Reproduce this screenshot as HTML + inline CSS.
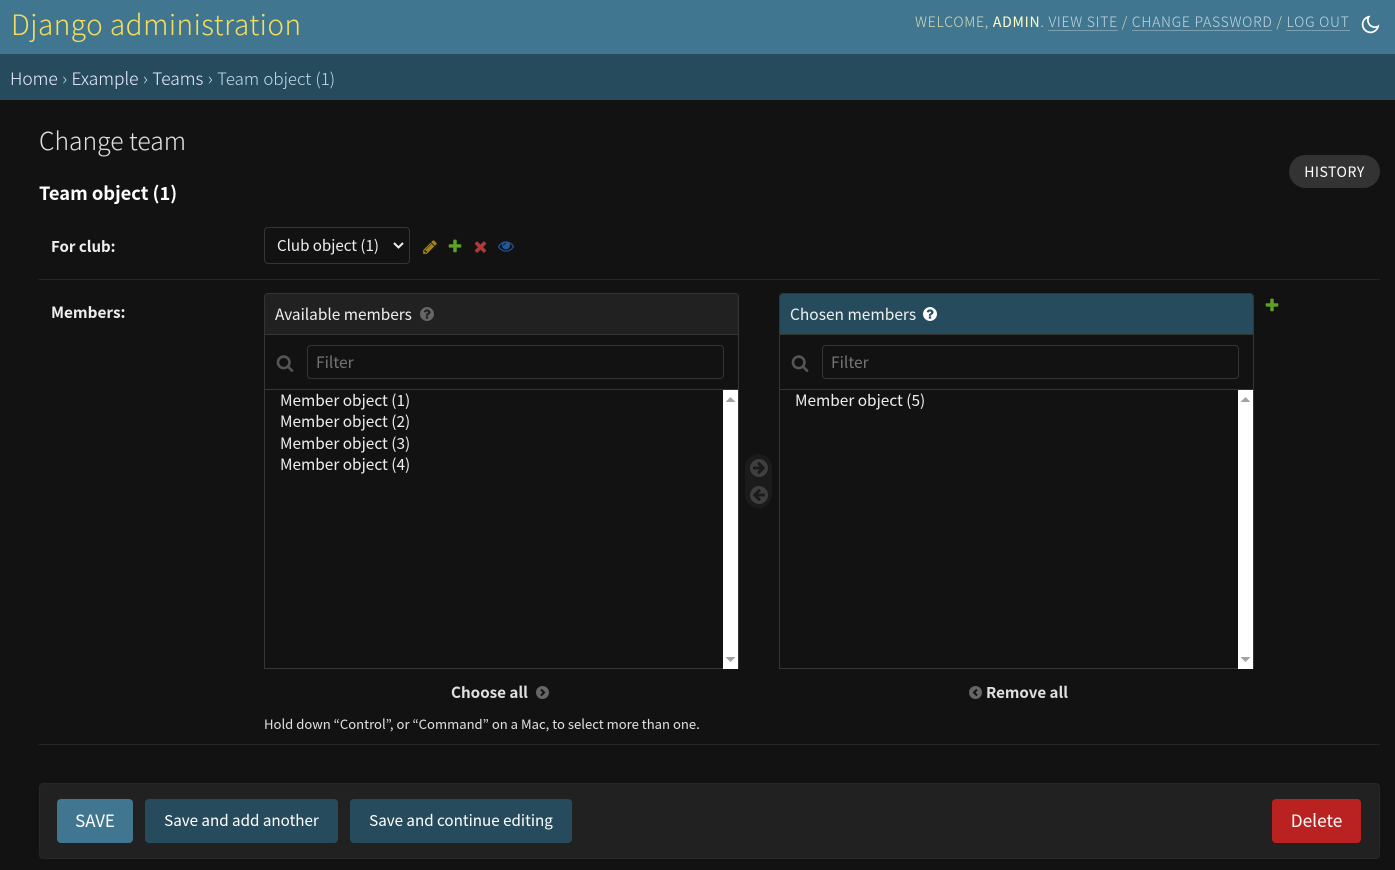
<!DOCTYPE html>
<html lang="en"><head><meta charset="utf-8"><title>Change team</title>
<style>
html,body{margin:0;padding:0;width:1395px;height:870px;overflow:hidden;background:#121212}
body{position:relative;color:#eee;font-family:"Noto Sans CJK JP","Liberation Sans",sans-serif;font-size:14px}
.a{position:absolute;white-space:nowrap;box-sizing:border-box}
svg{display:block;position:absolute}
.lnk{display:inline-block;line-height:15px;border-bottom:1px solid rgba(255,255,255,.3);color:#c3d6e0}
.btn{border-radius:4px;color:#fff;font-size:15.2px;line-height:42px;text-align:center;height:44px;top:799px}
.opt{font-size:15.4px;line-height:21px;color:#eee}
</style></head><body>
<div class="a" style="left:0;top:0;width:1395px;height:54px;background:#417690"></div>
<div class="a" style="left:0;top:54px;width:1395px;height:46px;background:#264b5d"></div>
<div class="a" style="left:11px;top:5px;font-size:28px;line-height:38px;font-weight:300;color:#f5dd5d;letter-spacing:.47px">Django administration</div>
<div class="a" style="left:915px;top:13px;font-size:14px;line-height:19px;font-weight:300;color:#d5dcb4;letter-spacing:.745px">WELCOME, <b style="font-weight:400;color:#ffc">ADMIN</b>. <span class="lnk">VIEW SITE</span> / <span class="lnk">CHANGE PASSWORD</span> / <span class="lnk">LOG OUT</span></div>
<svg style="left:1360px;top:14px" width="21" height="21" viewBox="0 0 24 24"><path fill="#fff" d="M10 7a7 7 0 0 0 12 4.900v.1c0 5.523-4.477 10-10 10S2 17.523 2 12 6.477 2 12 2h.1A6.979 6.979 0 0 0 10 7zm-6 5a8 8 0 0 0 15.062 3.762A9 9 0 0 1 8.238 4.938 7.996 7.996 0 0 0 4 12z"/></svg>
<div class="a" style="left:10px;top:66px;font-size:17.4px;line-height:24px;font-weight:300;color:#c4dce8;word-spacing:.5px"><span style="color:#eef">Home</span> › <span style="color:#eef">Example</span> › <span style="color:#eef">Teams</span> › <span style="font-size:16.9px">Team object (1)</span></div>

<div class="a" style="left:39px;top:124px;font-size:24.7px;line-height:32px;font-weight:300;color:#e0e0e0">Change team</div>
<div class="a" style="left:1289px;top:155px;width:91px;height:33px;border-radius:16.500px;background:#333;color:#fff;font-size:14px;line-height:35px;text-align:center;letter-spacing:.5px">HISTORY</div>
<div class="a" style="left:39px;top:180px;font-size:18.3px;line-height:27px;font-weight:700;color:#fff">Team object (1)</div>

<div class="a" style="left:51px;top:236px;font-size:15px;line-height:21px;font-weight:700;color:#eee">For club:</div>
<div class="a" style="left:264px;top:227px;width:146px;height:37px;border:1px solid #353535;border-radius:4px;background:#121212"></div>
<div class="a" style="left:277px;top:235px;font-size:15.1px;line-height:21px;color:#eee">Club object (1)</div>
<svg style="left:392px;top:241px" width="13" height="9" viewBox="0 0 13 9"><path d="M2 2l4.500 4.500L11 2" fill="none" stroke="#eee" stroke-width="2"/></svg>
<svg style="left:422px;top:239px" width="16" height="16" viewBox="0 0 1792 1792"><path fill="#a8820b" d="M491 1536l91-91-235-235-91 91v107h128v128h107zm523-928q0-22-22-22-10 0-17 7l-542 542q-7 7-7 17 0 22 22 22 10 0 17-7l542-542q7-7 7-17zm-54-192l416 416-832 832h-416v-416zm683 96q0 53-37 90l-166 166-416-416 166-165q36-38 90-38 53 0 91 38l235 234q37 39 37 91z"/></svg>
<svg style="left:447px;top:238px" width="16" height="16" viewBox="0 0 1792 1792"><path fill="#5fa225" d="M1600 796v192q0 40-28 68t-68 28h-416v416q0 40-28 68t-68 28h-192q-40 0-68-28t-28-68v-416h-416q-40 0-68-28t-28-68v-192q0-40 28-68t68-28h416v-416q0-40 28-68t68-28h192q40 0 68 28t28 68v416h416q40 0 68 28t28 68z"/></svg>
<svg style="left:472px;top:238px" width="17" height="17" viewBox="0 0 1792 1792"><path fill="#b03838" d="M1490 1322q0 40-28 68l-136 136q-28 28-68 28t-68-28l-294-294-294 294q-28 28-68 28t-68-28l-136-136q-28-28-28-68t28-68l294-294-294-294q-28-28-28-68t28-68l136-136q28-28 68-28t68 28l294 294 294-294q28-28 68-28t68 28l136 136q28 28 28 68t-28 68l-294 294 294 294q28 28 28 68z"/></svg>
<svg style="left:498px;top:238px" width="16" height="16" viewBox="0 0 1792 1792"><path fill="#22599a" d="M1664 960q-152-236-381-353 61 104 61 225 0 185-131.500 316.500t-316.500 131.500-316.500-131.500-131.500-316.500q0-121 61-225-229 117-381 353 133 205 333.500 326.500t434.500 121.500 434.500-121.500 333.500-326.500zm-720-384q0-20-14-34t-34-14q-125 0-214.500 89.500t-89.500 214.500q0 20 14 34t34 14 34-14 14-34q0-86 61-147t147-61q20 0 34-14t14-34zm848 384q0 34-20 69-140 230-376.500 368.500t-499.500 138.500-499.500-139-376.500-368q-20-35-20-69t20-69q140-229 376.500-368t499.500-139 499.500 139 376.500 368q20 35 20 69z"/></svg>
<div class="a" style="left:39px;top:279px;width:1341px;height:1px;background:#272727"></div>

<div class="a" style="left:51px;top:302px;font-size:15.3px;line-height:21px;font-weight:700;color:#eee">Members:</div>

<!-- available -->
<div class="a" style="left:264px;top:293px;width:475px;height:376px;border:1px solid #353535;border-radius:4px 4px 0 0"></div>
<div class="a" style="left:265px;top:294px;width:473px;height:41px;background:#212121;border-radius:3px 3px 0 0;border-bottom:1px solid #353535"></div>
<div class="a" style="left:275px;top:304px;font-size:15.4px;line-height:21px;color:#eee">Available members</div>
<svg style="left:420px;top:307px" width="14" height="14" viewBox="0 128 1536 1536"><path fill="#666" d="M896 1376v-192q0-14-9-23t-23-9h-192q-14 0-23 9t-9 23v192q0 14 9 23t23 9h192q14 0 23-9t9-23zm256-672q0-88-55.500-163t-138.500-116-170-41q-243 0-371 213-15 24 8 42l132 100q7 6 19 6 16 0 25-12 53-68 86-92 34-24 86-24 48 0 85.500 26t37.500 59q0 38-20 61t-68 45q-63 28-115.500 86.500t-52.500 125.500v36q0 14 9 23t23 9h192q14 0 23-9t9-23q0-19 21.500-49.500t54.500-49.500q32-18 49-28.500t46-35 44.500-48 28-60.500 12.500-81zm384 192q0 209-103 385.500t-279.500 279.500-385.500 103-385.500-103-279.500-279.500-103-385.500 103-385.500 279.500-279.500 385.500-103 385.500 103 279.500 279.500 103 385.500z"/></svg>
<svg style="left:276px;top:354px" width="18" height="18" viewBox="0 0 1792 1792"><path fill="#555" d="M1216 832q0-185-131.500-316.500t-316.500-131.500-316.500 131.500-131.500 316.500 131.500 316.500 316.500 131.500 316.500-131.500 131.500-316.500zm512 832q0 52-38 90t-90 38q-54 0-90-38l-343-342q-179 124-399 124-143 0-273.500-55.500t-225-150-150-225-55.500-273.500 55.500-273.500 150-225 225-150 273.500-55.500 273.500 55.500 225 150 150 225 55.500 273.500q0 220-124 399l343 343q37 37 37 90z"/></svg>
<div class="a" style="left:307px;top:345px;width:417px;height:34px;border:1px solid #353535;border-radius:4px"></div>
<div class="a" style="left:316px;top:352px;font-size:15.6px;line-height:21px;color:#757575">Filter</div>
<div class="a" style="left:265px;top:389px;width:473px;height:1px;background:#353535"></div>
<div class="a opt" style="left:280px;top:390px">Member object (1)</div>
<div class="a opt" style="left:280px;top:411px">Member object (2)</div>
<div class="a opt" style="left:280px;top:433px">Member object (3)</div>
<div class="a opt" style="left:280px;top:454px">Member object (4)</div>
<div class="a" style="left:723px;top:390px;width:15px;height:279px;background:#fff"></div>
<svg style="left:723px;top:390px" width="15" height="279" viewBox="0 0 15 279"><path d="M2.500 12L7.500 7l5 5z M2.500 267l5 5 5-5z" fill="#a3a3a3"/></svg>

<!-- chooser -->
<div class="a" style="left:745px;top:454px;width:27px;height:54px;background:#1b1b1b;border-radius:14px"></div>
<svg style="left:750px;top:459px" width="18" height="18" viewBox="0 128 1536 1536"><path fill="#3f3f3f" d="M1285 896q0-27-18-45l-91-91-362-362q-18-18-45-18t-45 18l-91 91q-18 18-18 45t18 45l189 189h-502q-26 0-45 19t-19 45v128q0 26 19 45t45 19h502l-189 189q-19 19-19 45t19 45l91 91q18 18 45 18t45-18l362-362 91-91q18-18 18-45zm251 0q0 209-103 385.500t-279.500 279.500-385.500 103-385.500-103-279.500-279.500-103-385.500 103-385.500 279.500-279.500 385.500-103 385.500 103 279.500 279.500 103 385.500z"/></svg>
<svg style="left:750px;top:486px;transform:scaleX(-1)" width="18" height="18" viewBox="0 128 1536 1536"><path fill="#3f3f3f" d="M1285 896q0-27-18-45l-91-91-362-362q-18-18-45-18t-45 18l-91 91q-18 18-18 45t18 45l189 189h-502q-26 0-45 19t-19 45v128q0 26 19 45t45 19h502l-189 189q-19 19-19 45t19 45l91 91q18 18 45 18t45-18l362-362 91-91q18-18 18-45zm251 0q0 209-103 385.500t-279.500 279.500-385.500 103-385.500-103-279.500-279.500-103-385.500 103-385.500 279.500-279.500 385.500-103 385.500 103 279.500 279.500 103 385.500z"/></svg>

<!-- chosen -->
<div class="a" style="left:779px;top:293px;width:475px;height:376px;border:1px solid #353535;border-radius:4px 4px 0 0"></div>
<div class="a" style="left:780px;top:294px;width:473px;height:41px;background:#264b5d;border-radius:3px 3px 0 0;border-bottom:1px solid #353535"></div>
<div class="a" style="left:790px;top:304px;font-size:15.5px;line-height:21px;color:#eee">Chosen members</div>
<svg style="left:923px;top:307px" width="14" height="14" viewBox="0 128 1536 1536"><path fill="#fff" d="M896 1376v-192q0-14-9-23t-23-9h-192q-14 0-23 9t-9 23v192q0 14 9 23t23 9h192q14 0 23-9t9-23zm256-672q0-88-55.500-163t-138.500-116-170-41q-243 0-371 213-15 24 8 42l132 100q7 6 19 6 16 0 25-12 53-68 86-92 34-24 86-24 48 0 85.500 26t37.500 59q0 38-20 61t-68 45q-63 28-115.500 86.500t-52.500 125.500v36q0 14 9 23t23 9h192q14 0 23-9t9-23q0-19 21.500-49.500t54.500-49.500q32-18 49-28.500t46-35 44.500-48 28-60.500 12.500-81zm384 192q0 209-103 385.500t-279.500 279.500-385.500 103-385.500-103-279.500-279.500-103-385.500 103-385.500 279.500-279.500 385.500-103 385.500 103 279.500 279.500 103 385.500z"/></svg>
<svg style="left:791px;top:354px" width="18" height="18" viewBox="0 0 1792 1792"><path fill="#555" d="M1216 832q0-185-131.500-316.500t-316.500-131.500-316.500 131.500-131.500 316.500 131.500 316.500 316.500 131.500 316.500-131.500 131.500-316.500zm512 832q0 52-38 90t-90 38q-54 0-90-38l-343-342q-179 124-399 124-143 0-273.500-55.500t-225-150-150-225-55.500-273.500 55.500-273.500 150-225 225-150 273.500-55.500 273.500 55.500 225 150 150 225 55.500 273.500q0 220-124 399l343 343q37 37 37 90z"/></svg>
<div class="a" style="left:822px;top:345px;width:417px;height:34px;border:1px solid #353535;border-radius:4px"></div>
<div class="a" style="left:831px;top:352px;font-size:15.6px;line-height:21px;color:#757575">Filter</div>
<div class="a" style="left:780px;top:389px;width:473px;height:1px;background:#353535"></div>
<div class="a opt" style="left:795px;top:390px">Member object (5)</div>
<div class="a" style="left:1238px;top:390px;width:15px;height:279px;background:#fff"></div>
<svg style="left:1238px;top:390px" width="15" height="279" viewBox="0 0 15 279"><path d="M2.500 12L7.500 7l5 5z M2.500 267l5 5 5-5z" fill="#a3a3a3"/></svg>
<svg style="left:1264px;top:297px" width="16" height="16" viewBox="0 0 1792 1792"><path fill="#5fa225" d="M1600 796v192q0 40-28 68t-68 28h-416v416q0 40-28 68t-68 28h-192q-40 0-68-28t-28-68v-416h-416q-40 0-68-28t-28-68v-192q0-40 28-68t68-28h416v-416q0-40 28-68t68-28h192q40 0 68 28t28 68v416h416q40 0 68 28t28 68z"/></svg>

<div class="a" style="left:451px;top:682px;font-size:15.2px;line-height:21px;font-weight:700;color:#e0e0e0">Choose all</div>
<svg style="left:536px;top:686px" width="13" height="13" viewBox="0 0 13 13"><circle cx="6.500" cy="6.500" r="6.500" fill="#666"/><path d="M5 3.500l3 3-3 3" fill="none" stroke="#121212" stroke-width="2"/></svg>
<svg style="left:969px;top:686px" width="13" height="13" viewBox="0 0 13 13"><circle cx="6.500" cy="6.500" r="6.500" fill="#666"/><path d="M8 3.500l-3 3 3 3" fill="none" stroke="#121212" stroke-width="2"/></svg>
<div class="a" style="left:986px;top:682px;font-size:15.1px;line-height:21px;font-weight:700;color:#e0e0e0">Remove all</div>
<div class="a" style="left:264px;top:715px;font-size:13.1px;line-height:18px;color:#e0e0e0">Hold down “Control”, or “Command” on a Mac, to select more than one.</div>
<div class="a" style="left:39px;top:744px;width:1341px;height:1px;background:#272727"></div>

<div class="a" style="left:39px;top:783px;width:1341px;height:76px;background:#212121;border:1px solid #272727;border-radius:4px"></div>
<div class="a btn" style="left:57px;width:76px;background:#417690;font-size:16.9px">SAVE</div>
<div class="a btn" style="left:145px;width:193px;background:#264b5d">Save and add another</div>
<div class="a btn" style="left:350px;width:222px;background:#264b5d">Save and continue editing</div>
<div class="a btn" style="left:1272px;width:89px;background:#ba2121;font-size:17.3px">Delete</div>
</body></html>
